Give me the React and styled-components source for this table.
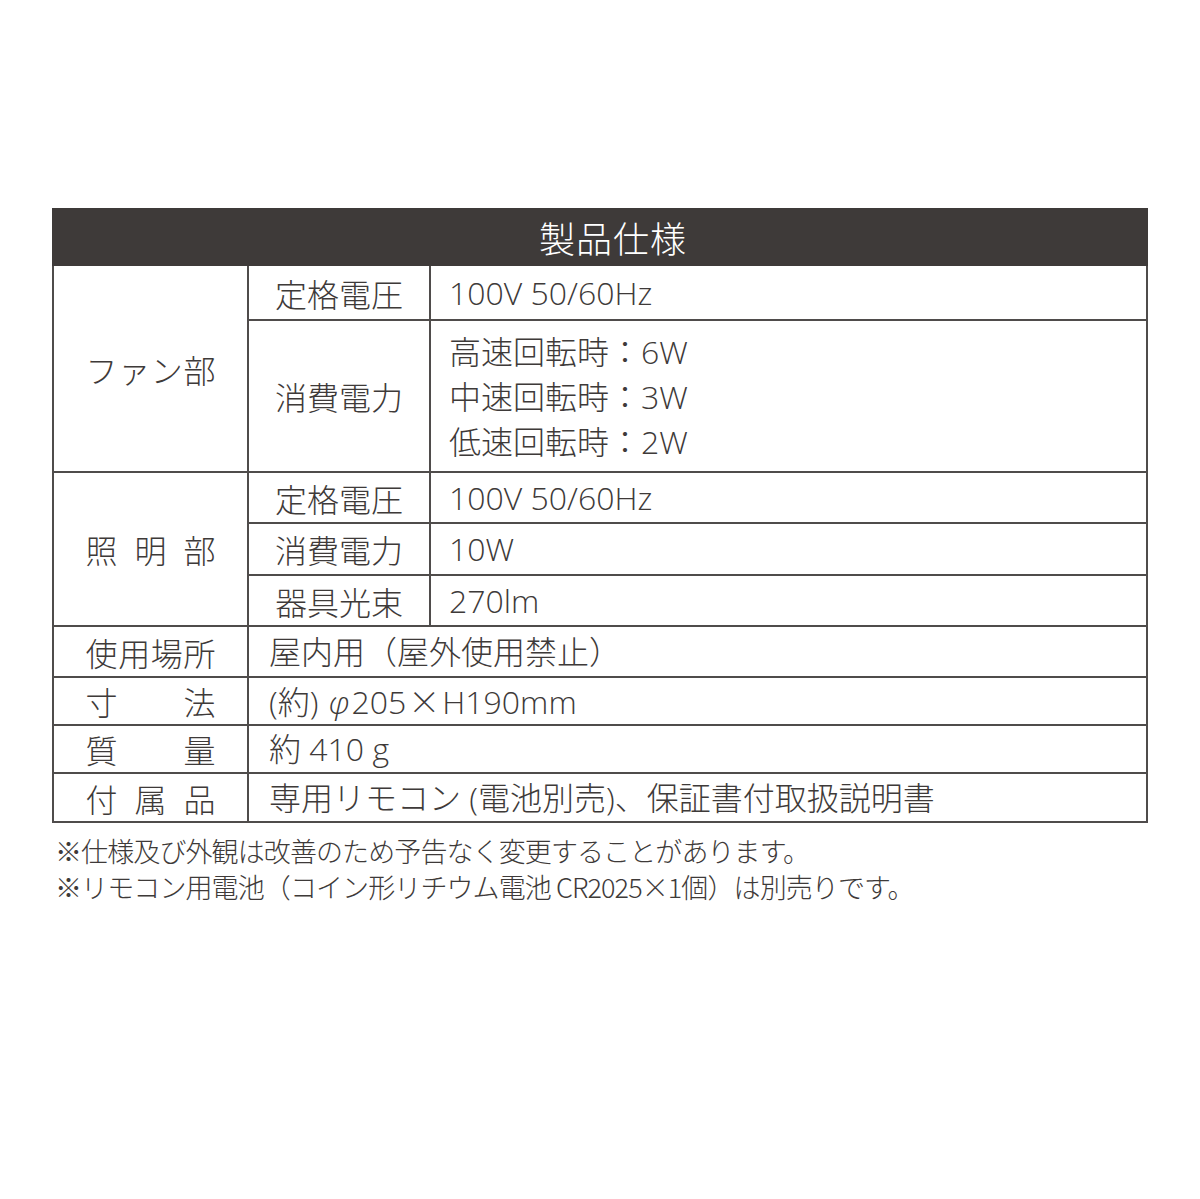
import React from "react";
import styled, { createGlobalStyle } from "styled-components";

const Global = createGlobalStyle`
  html, body { margin: 0; padding: 0; background: #fff; }
  body {
    font-family: "Open Sans", "Noto Sans CJK JP", sans-serif;
    color: #3e3a39;
  }
`;

const Page = styled.div`
  width: 1200px;
  height: 1199px;
  box-sizing: border-box;
  padding: 208px 52px 0;
  background: #fff;
`;

const Header = styled.div`
  height: 58px;
  background: #3e3a39;
  color: #fff;
  display: flex;
  align-items: center;
  justify-content: center;
  padding-left: 26px;
  font-family: "Noto Sans CJK JP", sans-serif;
  font-size: 36px;
  font-weight: 300;
  letter-spacing: 1px;
`;

const Grid = styled.div`
  display: grid;
  grid-template-columns: 193px 180px 1fr;
  grid-template-rows: 53px 150px 49px 50px 49px 49px 46px 46px 47px;
  gap: 2px;
  padding: 0 2px 2px;
  background: #4f4c4b;
`;

const Cell = styled.div`
  background: #fff;
  display: flex;
  align-items: center;
  grid-row: span ${(p) => p.$rows || 1};
  grid-column: span ${(p) => p.$cols || 1};
  font-size: 32px;
  font-weight: 300;
  line-height: 1;
  white-space: nowrap;
`;

const LabelCell = styled(Cell)`
  justify-content: center;
  font-family: "Noto Sans CJK JP", sans-serif;
`;

const Spread = styled.span`
  width: 130px;
  display: flex;
  justify-content: space-between;
`;

const SubCell = styled(Cell)`
  justify-content: center;
  font-family: "Noto Sans CJK JP", sans-serif;
`;

const ValueCell = styled(Cell)`
  padding-left: ${(p) => (p.$cols > 1 ? "20px" : "18px")};
  flex-direction: column;
  align-items: flex-start;
  justify-content: center;
`;

const Line = styled.div`
  line-height: 45px;
`;

const Cjk = styled.span`
  font-family: "Noto Sans CJK JP", sans-serif;
  margin: 0 ${(p) => p.$gap || 0}px;
`;

const Phi = styled.span`
  font-style: italic;
  margin: 0 2px 0 2px;
`;

const Notes = styled.div`
  margin-top: 10px;
  padding-left: 3px;
  font-family: "Noto Sans CJK JP", sans-serif;
  font-size: 27px;
  font-weight: 300;
  letter-spacing: -0.9px;
  line-height: 36px;
  color: #3e3a39;
`;

const Label = ({ text, rows }) => (
  <LabelCell $rows={rows}>
    <Spread>
      {[...text].map((c, i) => (
        <span key={i}>{c}</span>
      ))}
    </Spread>
  </LabelCell>
);

export default function App() {
  return (
    <>
      <Global />
      <Page>
        <Header>製品仕様</Header>
        <Grid>
          <Label text="ファン部" rows={2} />
          <SubCell>定格電圧</SubCell>
          <ValueCell>100V 50/60Hz</ValueCell>
          <SubCell>消費電力</SubCell>
          <ValueCell>
            <Line>高速回転時：6W</Line>
            <Line>中速回転時：3W</Line>
            <Line>低速回転時：2W</Line>
          </ValueCell>

          <Label text="照明部" rows={3} />
          <SubCell>定格電圧</SubCell>
          <ValueCell>100V 50/60Hz</ValueCell>
          <SubCell>消費電力</SubCell>
          <ValueCell>10W</ValueCell>
          <SubCell>器具光束</SubCell>
          <ValueCell>270lm</ValueCell>

          <Label text="使用場所" />
          <ValueCell $cols={2}>屋内用（屋外使用禁止）</ValueCell>
          <Label text="寸法" />
          <ValueCell $cols={2}>
            <span>
              (約) <Phi>φ</Phi>205<Cjk $gap={2}>×</Cjk>H190mm
            </span>
          </ValueCell>
          <Label text="質量" />
          <ValueCell $cols={2}>約 410 g</ValueCell>
          <Label text="付属品" />
          <ValueCell $cols={2}>専用リモコン (電池別売)、保証書付取扱説明書</ValueCell>
        </Grid>
        <Notes>
          <div>※仕様及び外観は改善のため予告なく変更することがあります。</div>
          <div>※リモコン用電池（コイン形リチウム電池 CR2025×1個）は別売りです。</div>
        </Notes>
      </Page>
    </>
  );
}
